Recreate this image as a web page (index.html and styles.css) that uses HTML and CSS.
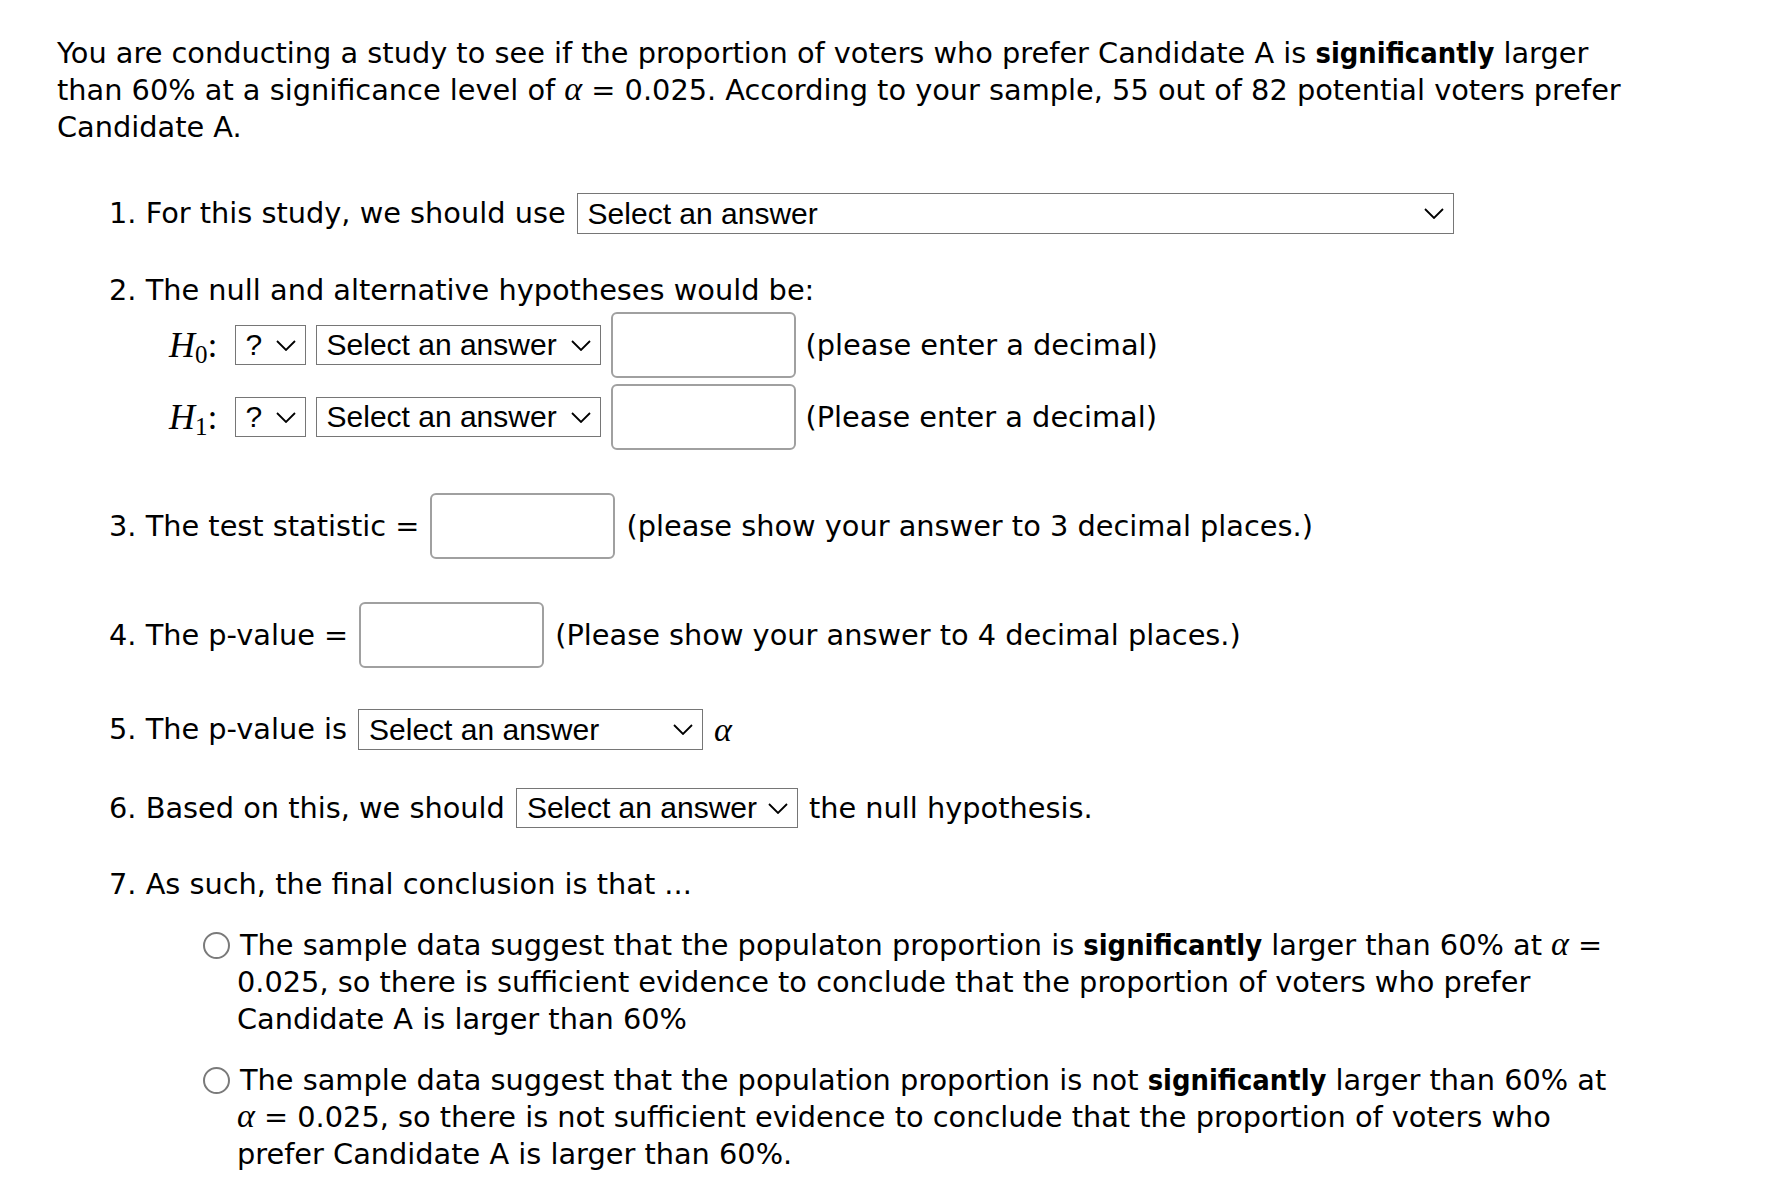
FILE: index.html
```html
<!DOCTYPE html>
<html lang="en">
<head>
<meta charset="utf-8">
<title>Hypothesis test question</title>
<link rel="stylesheet" href="styles.css">
</head>
<body>
<div class="question">
  <p class="intro">You are conducting a study to see if the proportion of voters who prefer Candidate A is <b>significantly</b> larger than 60% at a significance level of <i class="alpha">α</i> = 0.025. According to your sample, 55 out of 82 potential voters prefer Candidate A.</p>

  <ol class="steps">
    <li class="step s1">
      <span class="txt">1. For this study, we should use</span>
      <span class="sel sel-study"><span class="sel-text">Select an answer</span><svg class="chev" viewBox="0 0 20 11"><path d="M1 1L10 10L19 1"/></svg></span>
    </li>

    <li class="s2">
      <div class="txt">2. The null and alternative hypotheses would be:</div>
      <div class="hyp h0">
        <span class="hlabel"><i>H</i><sub>0</sub>:</span>
        <span class="sel sel-q"><span class="sel-text">?</span><svg class="chev" viewBox="0 0 20 11"><path d="M1 1L10 10L19 1"/></svg></span>
        <span class="sel sel-ans"><span class="sel-text">Select an answer</span><svg class="chev" viewBox="0 0 20 11"><path d="M1 1L10 10L19 1"/></svg></span>
        <span class="box"></span>
        <span class="txt">(please enter a decimal)</span>
      </div>
      <div class="hyp h1">
        <span class="hlabel"><i>H</i><sub>1</sub>:</span>
        <span class="sel sel-q"><span class="sel-text">?</span><svg class="chev" viewBox="0 0 20 11"><path d="M1 1L10 10L19 1"/></svg></span>
        <span class="sel sel-ans"><span class="sel-text">Select an answer</span><svg class="chev" viewBox="0 0 20 11"><path d="M1 1L10 10L19 1"/></svg></span>
        <span class="box"></span>
        <span class="txt">(Please enter a decimal)</span>
      </div>
    </li>

    <li class="step s3">
      <span class="txt">3. The test statistic =</span>
      <span class="box"></span>
      <span class="txt">(please show your answer to 3 decimal places.)</span>
    </li>

    <li class="step s4">
      <span class="txt">4. The p-value =</span>
      <span class="box"></span>
      <span class="txt">(Please show your answer to 4 decimal places.)</span>
    </li>

    <li class="step s5">
      <span class="txt">5. The p-value is</span>
      <span class="sel sel-cmp"><span class="sel-text">Select an answer</span><svg class="chev" viewBox="0 0 20 11"><path d="M1 1L10 10L19 1"/></svg></span>
      <i class="alpha">α</i>
    </li>

    <li class="step s6">
      <span class="txt">6. Based on this, we should</span>
      <span class="sel sel-rej"><span class="sel-text">Select an answer</span><svg class="chev" viewBox="0 0 20 11"><path d="M1 1L10 10L19 1"/></svg></span>
      <span class="txt">the null hypothesis.</span>
    </li>

    <li class="s7">
      <div class="txt">7. As such, the final conclusion is that ...</div>
      <div class="options">
        <p class="opt o1"><span class="radio"></span>The sample data suggest that the populaton proportion is <b>significantly</b> larger than 60% at <i class="alpha">α</i> = 0.025, so there is sufficient evidence to conclude that the proportion of voters who prefer Candidate A is larger than 60%</p>
        <p class="opt o2"><span class="radio"></span>The sample data suggest that the population proportion is not <b>significantly</b> larger than 60% at <i class="alpha">α</i> = 0.025, so there is not sufficient evidence to conclude that the proportion of voters who prefer Candidate A is larger than 60%.</p>
      </div>
    </li>
  </ol>
</div>
</body>
</html>
```

FILE: styles.css
```css
* { box-sizing: border-box; }

html, body {
  margin: 0;
  padding: 0;
  background: #ffffff;
}

body {
  font-family: "DejaVu Sans", sans-serif;
  font-size: 28.8px;
  line-height: 37px;
  color: #000000;
}

.question {
  width: 1628px;
  padding: 35px 0 0 57px;
}

.intro {
  margin: 0;
}

b {
  font-family: "DejaVu Sans Condensed", "DejaVu Sans", sans-serif;
  font-weight: bold;
}

.alpha {
  font-family: "Liberation Serif", "DejaVu Serif", serif;
  font-style: italic;
  font-size: 34px;
  line-height: 1;
}

.steps {
  list-style: none;
  margin: 47px 0 0 0;
  padding: 0 0 0 52px;
}

.step {
  display: flex;
  align-items: center;
  gap: 11px;
}

.s1 { margin-bottom: 38px; }

.hyp {
  display: flex;
  align-items: center;
  gap: 10px;
  padding-left: 60px;
}

.h0 { margin-top: 3px; }
.h1 { margin-top: 6px; }

.hlabel {
  font-family: "Liberation Serif", "DejaVu Serif", serif;
  font-size: 36px;
  line-height: 1;
  margin-right: 7px;
}

.hlabel i {
  font-style: italic;
}

.hlabel sub {
  font-size: 25px;
  vertical-align: -6px;
  line-height: 0;
}

.s3 { margin-top: 43px; }
.s4 { margin-top: 43px; }
.s5 { margin-top: 41px; }
.s6 { margin-top: 38px; }
.s7 { margin-top: 38px; }

.sel {
  flex: none;
  display: inline-flex;
  align-items: center;
  justify-content: space-between;
  height: 41px;
  border: 1px solid #767676;
  background: #ffffff;
  padding: 0 9px 0 10px;
  font-family: "Liberation Sans", Arial, sans-serif;
  font-size: 30px;
  line-height: 1;
}

.chev {
  width: 20px;
  height: 11px;
  flex: none;
}

.chev path {
  fill: none;
  stroke: #000000;
  stroke-width: 1.8;
}

.sel-study { width: 877px; }
.sel-q { width: 71px; height: 40px; }
.sel-ans { width: 285px; height: 40px; }
.sel-cmp { width: 345px; }
.sel-rej { width: 282px; height: 40px; }

.box {
  flex: none;
  width: 185px;
  height: 66px;
  border: 2px solid #a0a0a0;
  border-radius: 6px;
  background: #ffffff;
}

.options {
  padding-left: 128px;
  margin-top: 24px;
}

.opt {
  margin: 0;
  text-indent: -34px;
}

.o2 { margin-top: 24px; }

.radio {
  display: inline-block;
  width: 27px;
  height: 27px;
  border: 2px solid #7a7a7a;
  border-radius: 50%;
  background: #ffffff;
  vertical-align: -4px;
  margin-right: 10px;
  text-indent: 0;
}
```
